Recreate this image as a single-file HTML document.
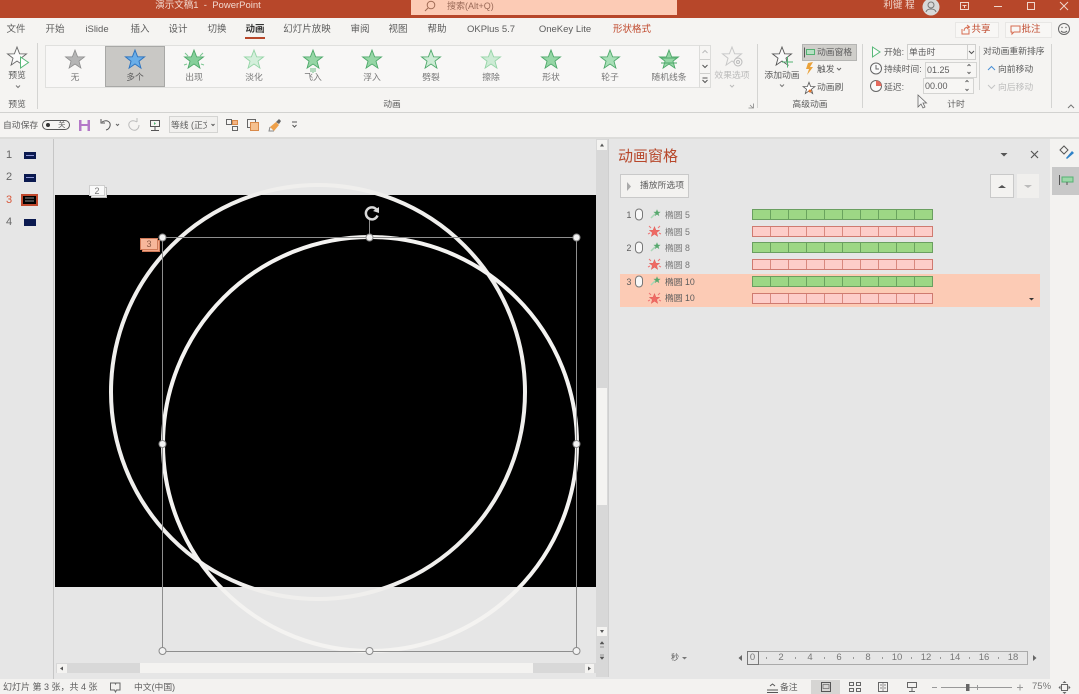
<!DOCTYPE html>
<html lang="zh"><head><meta charset="utf-8"><title>演示文稿1 - PowerPoint</title>
<style>
html,body{margin:0;padding:0;background:#e6e6e6}
#p{position:relative;width:1079px;height:694px;overflow:hidden;background:#e6e6e6;font-family:"Liberation Sans","Noto Sans CJK SC",sans-serif;font-size:8.8px;color:#5c5c5c}
#p div,#p span{position:absolute}
.t{white-space:nowrap;line-height:12px;transform:translateX(-50%)}
.l{white-space:nowrap;line-height:12px}
.b{font-size:9.5px}
.g{color:#777}
svg{position:absolute;left:0;top:0}
</style></head><body><div id="p">
<div style="left:0;top:0;width:1079px;height:18px;background:#b7472a"></div>
<div style="left:0;top:18px;width:1079px;height:120px;background:#f5f4f2"></div>
<div style="left:411px;top:0;width:266px;height:15px;background:#fccbb5"></div>
<div style="left:0;top:112px;width:1079px;height:1px;background:#d2d2d0"></div>
<div style="left:0;top:137px;width:1079px;height:2px;background:#dcdcda"></div>
<div style="left:1050px;top:139px;width:29px;height:541px;background:#f3f2f0"></div>
<div style="left:1052px;top:167px;width:27px;height:28px;background:#c8c8c8"></div>
<div style="left:0;top:679px;width:1079px;height:15px;background:#f3f2f0"></div>
<div style="left:53px;top:139px;width:1px;height:540px;background:#c6c6c6"></div>
<div style="left:55px;top:195px;width:541px;height:392px;background:#000"></div>
<div style="left:596px;top:139px;width:12px;height:538px;background:#d8d8d8"></div>
<div style="left:608px;top:139px;width:1px;height:538px;background:#cfcfcf"></div>
<div style="left:597px;top:388px;width:10px;height:117px;background:#f4f3f1"></div>
<div style="left:56px;top:663px;width:540px;height:10px;background:#d8d8d8"></div>
<div style="left:140px;top:663px;width:393px;height:10px;background:#f4f3f1"></div>
<div style="left:620px;top:274px;width:420px;height:33px;background:#fccbb5"></div>

<svg width="1079" height="694" viewBox="0 0 1079 694" fill="none">
<defs><polygon id="s" points="0,-10 2.6,-3.2 9.5,-3.1 4,1.2 5.900,8.100 0,4 -5.900,8.100 -4,1.200 -9.500,-3.100 -2.600,-3.200"/></defs>
<!-- gallery -->
<rect x="45.500" y="45.500" width="665" height="42" fill="#f8f7f6" stroke="#e0e0de"/>
<rect x="105.500" y="46.500" width="59" height="40" fill="#c9c8c5" stroke="#a8a8a6"/>
<use href="#s" x="75" y="60" fill="#b5b5b5" stroke="#8e8e8e" stroke-width=".8"/>
<use href="#s" x="135" y="60" fill="#6aaee8" stroke="#2f75c0" stroke-width="1"/>
<g fill="#96d6a6" stroke="#4da869" stroke-width=".9">
<use href="#s" x="194" y="60" fill="#86cf9b"/>
<use href="#s" x="254" y="60" fill="#d4efdb" stroke="#94d4a6"/>
<use href="#s" x="313" y="60"/><use href="#s" x="372" y="60"/>
<use href="#s" x="431" y="60" fill="#cdebd5"/><use href="#s" x="491" y="60" fill="#cdebd5" stroke="#94d4a6"/>
<use href="#s" x="551" y="60"/><use href="#s" x="610" y="60" fill="#a8dfb7"/><use href="#s" x="669" y="60"/>
</g>
<path d="M185 53l3 3M203 53l-3 3M184 65l3-1M204 65l-3-1" stroke="#7cc792"/>
<path d="M311 68v4M313 68v5M315 68v4" stroke="#6cbb84"/>
<path d="M661 58h16M661 63h16" stroke="#4da869"/>
<!-- preview star -->
<use href="#s" x="17" y="57" fill="#fbfbfb" stroke="#666" stroke-width=".9"/>
<path d="M20.500 57l8 5.500-8 5.500z" fill="#fff" stroke="#58b878"/>
<path d="M16 85.500l2 2 2-2" stroke="#777"/>
<!-- gallery arrows -->
<rect x="699.500" y="45.500" width="11" height="42" fill="#f6f5f3" stroke="#dcdcda"/>
<path d="M700 59.500h10M700 73.500h10" stroke="#cfcfcd"/>
<path d="M702.500 53l2.500-2.500 2.500 2.500" stroke="#bbb"/><path d="M702.500 65l2.500 2.500 2.500-2.500" stroke="#555"/><path d="M702.500 78h5M702.500 80l2.500 2.500 2.500-2.500" stroke="#555"/>
<!-- effect -->
<use href="#s" x="732" y="57" fill="#f5f4f2" stroke="#c8c8c8"/><circle cx="738" cy="62" r="4" fill="#f5f4f2" stroke="#bbb"/><circle cx="738" cy="62" r="1.500" stroke="#bbb"/>
<path d="M730 85l2 2 2-2" stroke="#bbb"/>
<!-- separators -->
<path d="M37.500 43v66M757.500 44v64M862.500 44v64M979.500 46v44M1051.500 44v64" stroke="#d4d4d2"/>
<path d="M753.500 103.500v4.500h-5M750 105l3 3" stroke="#888" stroke-width=".8"/>
<path d="M1068 108l3-3 3 3" stroke="#777"/>
<!-- add anim -->
<use href="#s" x="782" y="57" fill="#f9f9f9" stroke="#555" stroke-width=".9"/><path d="M782 62h11M787.500 56.500v11" stroke="#53b272"/>
<path d="M780 84.500l2 2 2-2" stroke="#777"/>
<rect x="802.500" y="44.500" width="54" height="16" fill="#cfceca" stroke="#b5b5b3"/>
<path d="M804.500 47.500v10" stroke="#555"/><rect x="806.500" y="49.500" width="8" height="5" stroke="#53b272" fill="#b7e0c3"/>
<path d="M808 63l5-1-3 5h3l-6 8 2-6h-3z" fill="#eaa23a"/>
<use href="#s" transform="translate(809 88.500) scale(.62)" fill="#fff" stroke="#555" stroke-width="1.300"/><circle cx="810" cy="91" r="1.500" fill="#e8772a"/>
<path d="M837 68l2 2 2-2" stroke="#666"/>
<!-- timing -->
<path d="M872.500 47v10l7.500-5z" fill="#fbfbfb" stroke="#58b878"/>
<rect x="907.500" y="44.500" width="68" height="15" fill="#f7f6f4" stroke="#cfcfcd"/><path d="M967.500 45v14" stroke="#cfcfcd"/><path d="M969 51l2.500 2.500 2.500-2.500" stroke="#555"/>
<circle cx="876" cy="68.500" r="5.500" fill="#fafafa" stroke="#666"/><path d="M876 65v4h3" stroke="#666"/>
<rect x="925.500" y="62.500" width="51" height="15" fill="#f7f6f4" stroke="#d4d4d2"/><path d="M967.500 66l1.500-1.500 1.500 1.500M967.500 72l1.500 1.500 1.500-1.500" stroke="#666"/>
<circle cx="876" cy="86" r="5.500" fill="#fafafa" stroke="#666"/><path d="M876 86v-5.500a5.500 5.500 0 0 1 5.500 5.500z" fill="#e46a5d"/>
<rect x="923.500" y="78.500" width="50" height="15" fill="#f7f6f4" stroke="#d4d4d2"/><path d="M965.500 82l1.500-1.500 1.500 1.500M965.500 89l1.500 1.500 1.500-1.500" stroke="#666"/>
<path d="M918 95v12l3-3 2 4 2-1-2-4h3.500z" fill="#f5f5f5" stroke="#666" stroke-width=".8"/>
<path d="M988 70l3.500-3.500 3.500 3.500" stroke="#4a90d6"/>
<path d="M988 85l3.500 3.500 3.500-3.500" stroke="#c4c4c4"/>
<!-- share -->
<rect x="955.500" y="22.500" width="43" height="15" fill="#f8f7f5" stroke="#e8e7e5"/><rect x="1005.500" y="22.500" width="46" height="15" fill="#f8f7f5" stroke="#e8e7e5"/>
<path d="M962 29v5h7v-5M964 31c0-3 2-4 5-4M967 25l2.500 2-2.500 2" stroke="#d66b50"/>
<path d="M1011 26h9v6h-6l-2 2v-2h-1z" stroke="#d66b50"/>
<circle cx="1064" cy="29" r="5.500" stroke="#666"/><circle cx="1062" cy="27.500" r=".7" fill="#666"/><circle cx="1066" cy="27.500" r=".7" fill="#666"/><path d="M1061 31c1.500 1.800 4.500 1.800 6 0" stroke="#666"/>
<!-- title controls -->
<circle cx="931" cy="7" r="8.500" fill="#d8d8d8"/><circle cx="931" cy="5" r="3" stroke="#777"/><path d="M926 12c1-4 9-4 10 0" stroke="#777"/>
<rect x="960.500" y="2.500" width="8" height="7" stroke="#f0d6cc"/><path d="M962.500 5.500h4M964.500 5v3" stroke="#f0d6cc"/>
<path d="M994 6.500h8" stroke="#f0d6cc"/><rect x="1027.500" y="2.500" width="7" height="7" stroke="#f0d6cc"/>
<path d="M1060 2l8 8M1068 2l-8 8" stroke="#f0d6cc"/>
<circle cx="431" cy="5" r="3.800" stroke="#a06b55"/><path d="M428 8l-3 3" stroke="#a06b55"/>
<!-- QAT -->
<rect x="42.500" y="120.500" width="27" height="9" rx="4.500" stroke="#555"/><circle cx="48" cy="125" r="2" fill="#333"/>
<rect x="79" y="120" width="11" height="11" fill="#b478c8"/><rect x="81.500" y="120" width="6" height="4" fill="#f5f4f2"/><rect x="81.500" y="126" width="6" height="5" fill="#f5f4f2"/>
<path d="M102 122c5-3 9 0 8 4-.500 2-2 3.500-4 4M101 119v4h4" stroke="#555"/><path d="M116 124l1.500 1.500 1.500-1.500" stroke="#666"/>
<path d="M137 122c-5-3-9 0-8 4 1 3 4 5 7 4 2-1 3-3 3-5M137 118v4" stroke="#bbb"/>
<rect x="150.500" y="120.500" width="9" height="6" stroke="#555"/><path d="M155 127v3M151 130.500h8" stroke="#555"/><path d="M154 122v3l2-1.500z" fill="#53b272"/>
<rect x="169.500" y="116.500" width="48" height="16" fill="#f1f0ee" stroke="#d4d4d2"/><path d="M211.500 124l1.500 1.500 1.500-1.500" stroke="#555"/>
<rect x="226.500" y="119.500" width="5" height="5" stroke="#666"/><rect x="232.500" y="120.500" width="5" height="4" fill="#f3b483" stroke="#d98a4a"/><rect x="232.500" y="126.500" width="5" height="4" stroke="#666"/>
<rect x="247.500" y="119.500" width="8" height="8" stroke="#666"/><rect x="250.500" y="122.500" width="8" height="8" fill="#f6c18f" stroke="#d98a4a"/>
<path d="M270 127l6-5 3 3-5 6z" fill="#eea04a"/><path d="M276 122l3-3 2 2-2 3" fill="#666"/><path d="M270 127l-1 4 5 0" stroke="#888"/>
<path d="M292 122h5M292.500 125l2 2 2-2" stroke="#555"/>
<!-- thumbnails -->
<rect x="24" y="152" width="12" height="7" fill="#0b1a50"/><path d="M26 155.500h8" stroke="#8e96d8"/>
<rect x="24" y="174" width="12" height="8" fill="#0b1a50"/><path d="M26 177.500h8" stroke="#8e96d8"/>
<rect x="22" y="195" width="15" height="10" fill="#000" stroke="#c0492d" stroke-width="2"/><path d="M25 198h9M25 201h9" stroke="#bbb" stroke-width=".8"/>
<rect x="24" y="219" width="12" height="7" fill="#0b1a50"/>
<!-- circles -->
<circle cx="318" cy="392" r="207" stroke="#f0efed" stroke-width="4"/>
<circle cx="370" cy="444" r="207" stroke="#f4f3f1" stroke-width="4"/>
<rect x="162.500" y="237.500" width="414" height="414" stroke="#8e8e8e"/>
<path d="M369.500 237v-17" stroke="#8e8e8e"/>
<path d="M376.500 209.500a6 6 0 1 0 1 6" stroke="#d8d8d8" stroke-width="2.500"/><path d="M373 211l6 2 0-6z" fill="#d8d8d8"/>
<g fill="#f2f2f2" stroke="#8a8a8a"><circle cx="162.500" cy="237.500" r="3.500"/><circle cx="369.500" cy="237.500" r="3.500"/><circle cx="576.500" cy="237.500" r="3.500"/><circle cx="162.500" cy="444" r="3.500"/><circle cx="576.500" cy="444" r="3.500"/><circle cx="162.500" cy="651" r="3.500"/><circle cx="369.500" cy="651" r="3.500"/><circle cx="576.500" cy="651" r="3.500"/></g>
<!-- tags -->
<rect x="91.500" y="187.500" width="15" height="10" fill="#f0f0ee" stroke="#bdbdbd"/><rect x="89.500" y="185.500" width="15" height="10" fill="#fafafa" stroke="#cfcfcf"/>
<rect x="142.500" y="240.500" width="17" height="11" fill="#f3a889" stroke="#d07a58"/><rect x="140.500" y="238.500" width="17" height="11" fill="#f7b79b" stroke="#d07a58"/>
<!-- scroll arrows -->
<rect x="597" y="140" width="10" height="10" fill="#f4f3f1"/><path d="M600 146.500l2-3 2 3z" fill="#555"/>
<rect x="597" y="627" width="10" height="9" fill="#f4f3f1"/><path d="M600 630l2 3 2-3z" fill="#555"/>
<path d="M600 644l2-2.500 2 2.500zM600 647h4M600 655h4M600 657l2 2.500 2-2.500z" fill="#555" stroke="#555" stroke-width=".5"/>
<rect x="57" y="664" width="10" height="9" fill="#f4f3f1"/><path d="M63 666.500v4l-3-2z" fill="#555"/>
<rect x="585" y="664" width="9" height="9" fill="#f4f3f1"/><path d="M588 666.500v4l3-2z" fill="#555"/>
<!-- pane -->
<rect x="620.500" y="174.500" width="68" height="23" fill="#f3f2f0" stroke="#c9c9c9"/><path d="M627 182v9l4-4.500z" fill="#aaa"/>
<rect x="990.500" y="174.500" width="23" height="23" fill="#f3f2f0" stroke="#c9c9c9"/><path d="M998 188l4-3 4 3z" fill="#555"/>
<rect x="1017" y="174" width="22" height="24" fill="#f0efed"/><path d="M1024 185l4 3 4-3z" fill="#bbb"/>
<path d="M1000.500 153l3.500 3.500 3.500-3.500z" fill="#555"/>
<path d="M1031 151l7 7M1038 151l-7 7" stroke="#555" stroke-width="1.200"/>
<g fill="#9dd785" stroke="#6a9f60">
<rect x="752.500" y="209.500" width="180" height="10"/><rect x="752.500" y="242.500" width="180" height="10"/><rect x="752.500" y="276.500" width="180" height="10"/></g>
<g fill="#fdcdc9" stroke="#cf7a70">
<rect x="752.500" y="226.500" width="180" height="10"/><rect x="752.500" y="259.500" width="180" height="10"/><rect x="752.500" y="293.500" width="180" height="10"/></g>
<g stroke="#6aa35e"><path d="M770.500 210v9M788.500 210v9M806.500 210v9M824.500 210v9M842.500 210v9M860.500 210v9M878.500 210v9M896.500 210v9M914.500 210v9"/>
<path d="M770.500 243v9M788.500 243v9M806.500 243v9M824.500 243v9M842.500 243v9M860.500 243v9M878.500 243v9M896.500 243v9M914.500 243v9"/>
<path d="M770.500 277v9M788.500 277v9M806.500 277v9M824.500 277v9M842.500 277v9M860.500 277v9M878.500 277v9M896.500 277v9M914.500 277v9"/></g>
<g stroke="#d9897f"><path d="M770.500 227v9M788.500 227v9M806.500 227v9M824.500 227v9M842.500 227v9M860.500 227v9M878.500 227v9M896.500 227v9M914.500 227v9"/>
<path d="M770.500 260v9M788.500 260v9M806.500 260v9M824.500 260v9M842.500 260v9M860.500 260v9M878.500 260v9M896.500 260v9M914.500 260v9"/>
<path d="M770.500 294v9M788.500 294v9M806.500 294v9M824.500 294v9M842.500 294v9M860.500 294v9M878.500 294v9M896.500 294v9M914.500 294v9"/></g>
<path d="M1029 298l2.500 2.500 2.500-2.500z" fill="#333"/>
<g stroke="#777" fill="#f8f8f8"><rect x="635.500" y="209" width="7" height="11" rx="3.500"/><rect x="635.500" y="242" width="7" height="11" rx="3.500"/><rect x="635.500" y="276" width="7" height="11" rx="3.500"/></g>
<g fill="#57a86e"><use href="#s" transform="translate(657 213) scale(.38)"/><use href="#s" transform="translate(657 246) scale(.38)"/><use href="#s" transform="translate(657 280) scale(.38)"/></g>
<path d="M651 218l4-4M651 251l4-4M651 285l4-4" stroke="#a9d7b7" stroke-width="1.500"/>
<g fill="#ef6a64" stroke="#d64a45" stroke-width=".6"><use href="#s" transform="translate(654.500 232) scale(.55)"/><use href="#s" transform="translate(654.500 265) scale(.55)"/><use href="#s" transform="translate(654.500 299) scale(.55)"/></g>
<path d="M649 226l2 2M660 226l-2 2M648 234l2-1M661 234l-2-1M649 259l2 2M660 259l-2 2M648 267l2-1M661 267l-2-1M649 293l2 2M660 293l-2 2M648 301l2-1M661 301l-2-1" stroke="#e77"/>
<!-- right strip icons -->
<path d="M1060 150l4-4 4 4-4 4z" stroke="#555"/><path d="M1066 158l6-7 2 2-7 6z" fill="#2f83c8"/>
<path d="M1059.500 175v10" stroke="#555"/><rect x="1062" y="177" width="11" height="5" fill="#9dd7a8" stroke="#53b272"/><path d="M1067 182v3" stroke="#555"/>
<!-- timeline -->
<path d="M742 655v6l-3.500-3z" fill="#666"/>
<rect x="747.500" y="651.500" width="280" height="13" stroke="#aaa"/><rect x="747.500" y="651.500" width="11" height="13" stroke="#777"/>
<path d="M1033 655v6l3.500-3z" fill="#666"/>
<path d="M682 657l2.500 2.500 2.500-2.500z" fill="#777"/>
<path d="M766.500 657v2M795.500 657v2M824.500 657v2M853.500 657v2M882.500 657v2M911.500 657v2M940.500 657v2M969.500 657v2M998.500 657v2" stroke="#999"/>
<!-- status -->
<path d="M110.500 683h4.500l.5 1 .5-1h4v7h-3.500l-1 2-1-2h-4z" stroke="#666"/>
<rect x="811" y="680" width="29" height="14" fill="#d6d5d3"/>
<rect x="821.500" y="682.500" width="9" height="9" stroke="#555"/><rect x="823" y="684.500" width="6" height="4" stroke="#555" stroke-width=".6"/>
<path d="M767 690h11M767 692.500h11M770 686l2.500-2 2.500 2" stroke="#555"/>
<rect x="849.500" y="682.500" width="4" height="3" stroke="#666"/><rect x="856.500" y="682.500" width="4" height="3" stroke="#666"/><rect x="849.500" y="688.500" width="4" height="3" stroke="#666"/><rect x="856.500" y="688.500" width="4" height="3" stroke="#666"/>
<rect x="878.500" y="682.500" width="9" height="9" stroke="#666"/><path d="M883 683v8M880 685h2M880 688h2M884 685h2M884 688h2" stroke="#666" stroke-width=".7"/>
<rect x="907.500" y="682.500" width="9" height="5" stroke="#666"/><path d="M912 688v3M909 691.500h6" stroke="#666"/>
<path d="M932 687.500h5M941 687.500h71M1017 687.500h6M1020 684.500v6" stroke="#999"/><rect x="966" y="684" width="3.500" height="7" fill="#666"/><path d="M977.500 685v5" stroke="#999"/>
<rect x="1061.500" y="684.500" width="6" height="6" stroke="#666"/><path d="M1064.500 681l-2 2h4zM1064.500 694l-2-2h4zM1058.500 687.500l2-2v4zM1070.500 687.500l-2-2v4z" fill="#666"/>
</svg>

<span class="t" style="left:208px;top:0;color:#f2d9cf;font-size:9.500px">演示文稿1&nbsp; -&nbsp; PowerPoint</span>
<span class="l" style="left:447px;top:0;color:#9a6a58;font-size:9px">搜索(Alt+Q)</span>
<span class="t" style="left:899px;top:0;color:#f2d9cf;font-size:9.500px">利键 程</span>

<span class="t b" style="left:16px;top:24px">文件</span><span class="t b" style="left:55px;top:24px">开始</span><span class="t b" style="left:97px;top:24px">iSlide</span><span class="t b" style="left:140px;top:24px">插入</span><span class="t b" style="left:178px;top:24px">设计</span><span class="t b" style="left:217px;top:24px">切换</span><span class="t b" style="left:255px;top:24px;color:#333;font-weight:bold">动画</span><div style="left:245px;top:37px;width:20px;height:2px;background:#b7472a"></div><span class="t b" style="left:307px;top:24px">幻灯片放映</span><span class="t b" style="left:360px;top:24px">审阅</span><span class="t b" style="left:398px;top:24px">视图</span><span class="t b" style="left:437px;top:24px">帮助</span><span class="t b" style="left:491px;top:24px">OKPlus 5.7</span><span class="t b" style="left:565px;top:24px">OneKey Lite</span><span class="t b" style="left:632px;top:24px;color:#c0492d">形状格式</span>
<span class="t" style="left:981px;top:24px;color:#c0492d;font-size:9.500px">共享</span><span class="t" style="left:1031px;top:24px;color:#c0492d;font-size:9.500px">批注</span>

<span class="t" style="left:17px;top:69px">预览</span><span class="t" style="left:17px;top:98px">预览</span><span class="t" style="left:392px;top:98px">动画</span><span class="t" style="left:810px;top:98px">高级动画</span><span class="t" style="left:956px;top:98px">计时</span>
<span class="t g" style="left:75px;top:71px">无</span><span class="t" style="left:135px;top:71px">多个</span><span class="t g" style="left:194px;top:71px">出现</span><span class="t g" style="left:254px;top:71px">淡化</span><span class="t g" style="left:313px;top:71px">飞入</span><span class="t g" style="left:372px;top:71px">浮入</span><span class="t g" style="left:431px;top:71px">劈裂</span><span class="t g" style="left:491px;top:71px">擦除</span><span class="t g" style="left:551px;top:71px">形状</span><span class="t g" style="left:610px;top:71px">轮子</span><span class="t g" style="left:669px;top:71px">随机线条</span>
<span class="t" style="left:732px;top:69px;color:#bbb">效果选项</span>
<span class="t" style="left:782px;top:69px">添加动画</span>
<span class="l" style="left:817px;top:46px">动画窗格</span><span class="l" style="left:817px;top:63px">触发</span><span class="l" style="left:817px;top:81px">动画刷</span>
<span class="l" style="left:884px;top:46px">开始:</span><span class="l" style="left:909px;top:46px">单击时</span><span class="l" style="left:884px;top:63px">持续时间:</span><span class="l" style="left:927px;top:64px;font-size:9px">01.25</span><span class="l" style="left:884px;top:81px">延迟:</span><span class="l" style="left:925px;top:80px;font-size:9px">00.00</span>
<span class="l" style="left:983px;top:45px">对动画重新排序</span><span class="l" style="left:998px;top:63px">向前移动</span><span class="l" style="left:998px;top:81px;color:#bbb">向后移动</span>

<span class="l" style="left:3px;top:119px">自动保存</span><span class="l" style="left:58px;top:119px;font-size:7.500px">关</span><span class="l" style="left:171px;top:119px;width:36px;overflow:hidden">等线 (正文</span>

<span class="t" style="left:9px;top:149px;font-size:11px;color:#666">1</span><span class="t" style="left:9px;top:171px;font-size:11px;color:#666">2</span><span class="t" style="left:9px;top:194px;font-size:11px;color:#d8593c">3</span><span class="t" style="left:9px;top:216px;font-size:11px;color:#666">4</span>
<span class="t" style="left:97px;top:185px;font-size:9px;color:#777">2</span><span class="t" style="left:149px;top:238px;font-size:9px;color:#8c5a44">3</span>

<span class="l" style="left:618px;top:148px;font-size:15px;line-height:18px;color:#b7472a">动画窗格</span>
<span class="l" style="left:640px;top:179px">播放所选项</span>
<span class="t" style="left:629px;top:209px">1</span><span class="t" style="left:629px;top:242px">2</span><span class="t" style="left:629px;top:276px">3</span>
<span class="l g" style="left:665px;top:209px">椭圆 5</span><span class="l g" style="left:665px;top:226px">椭圆 5</span><span class="l g" style="left:665px;top:242px">椭圆 8</span><span class="l g" style="left:665px;top:259px">椭圆 8</span><span class="l" style="left:665px;top:276px">椭圆 10</span><span class="l" style="left:665px;top:292px">椭圆 10</span>

<span class="l" style="left:671px;top:652px;font-size:8px">秒</span>
<span class="t g" style="left:752.500px;top:652px;font-size:9.500px">0</span><span class="t g" style="left:781px;top:652px;font-size:9.500px">2</span><span class="t g" style="left:810px;top:652px;font-size:9.500px">4</span><span class="t g" style="left:839px;top:652px;font-size:9.500px">6</span><span class="t g" style="left:868px;top:652px;font-size:9.500px">8</span><span class="t g" style="left:897px;top:652px;font-size:9.500px">10</span><span class="t g" style="left:926px;top:652px;font-size:9.500px">12</span><span class="t g" style="left:955px;top:652px;font-size:9.500px">14</span><span class="t g" style="left:984px;top:652px;font-size:9.500px">16</span><span class="t g" style="left:1013px;top:652px;font-size:9.500px">18</span>

<span class="l" style="left:3px;top:681px;font-size:9px">幻灯片 第 3 张，共 4 张</span><span class="l" style="left:134px;top:681px">中文(中国)</span><span class="l" style="left:780px;top:681px">备注</span><span class="l g" style="left:1032px;top:681px;font-size:9.500px">75%</span>
</div></body></html>
